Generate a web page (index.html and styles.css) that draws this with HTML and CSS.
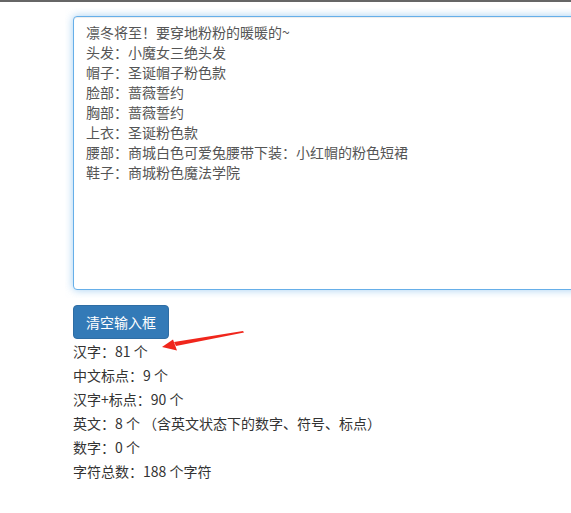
FILE: index.html
```html
<!DOCTYPE html>
<html lang="zh-CN">
<head>
<meta charset="utf-8">
<title>字数统计</title>
<link rel="stylesheet" href="styles.css">
</head>
<body>
<div class="topbar"></div>
<main class="wrap">
  <div class="input-clip">
    <textarea class="input" spellcheck="false">凛冬将至！要穿地粉粉的暖暖的~
头发：小魔女三绝头发
帽子：圣诞帽子粉色款
脸部：蔷薇誓约
胸部：蔷薇誓约
上衣：圣诞粉色款
腰部：商城白色可爱兔腰带下装：小红帽的粉色短裙
鞋子：商城粉色魔法学院</textarea>
  </div>
  <div class="actions">
    <button class="btn" type="button">清空输入框</button>
  </div>
  <div class="stats">
    <div class="stat">汉字：81 个</div>
    <div class="stat">中文标点：9 个</div>
    <div class="stat">汉字+标点：90 个</div>
    <div class="stat">英文：8 个 （含英文状态下的数字、符号、标点）</div>
    <div class="stat">数字：0 个</div>
    <div class="stat">字符总数：188 个字符</div>
  </div>
</main>
<svg class="arrow" width="571" height="513" viewBox="0 0 571 513">
  <polygon points="243,331 244,332.5 176,346 174,342" fill="#f0261c"/>
  <polygon points="162,347 173,339.5 177,350.5" fill="#f0261c"/>
</svg>
</body>
</html>
```

FILE: styles.css
```css
html, body {
  margin: 0;
  padding: 0;
  overflow: hidden;
  background: #fff;
}
body {
  width: 571px;
  height: 513px;
  font-family: "Noto Sans CJK SC", "Microsoft YaHei", sans-serif;
  font-size: 14px;
  color: #333;
  position: relative;
}
.topbar {
  height: 2px;
  background: #666;
}
.wrap {
  padding: 6px 0 0 73px;
}
.input-clip {
  overflow: hidden;
  width: 498px;
  padding: 8px 0 8px 0;
  margin-left: -8px;
  padding-left: 8px;
}
.input {
  display: block;
  box-sizing: border-box;
  width: 520px;
  height: 274px;
  margin: 0;
  padding: 5px 12px;
  border: 1px solid #66afe9;
  border-radius: 4px;
  box-shadow: inset 0 1px 1px rgba(0,0,0,.075), 0 0 8px rgba(102,175,233,.6);
  outline: none;
  resize: none;
  font-family: "Noto Sans CJK SC", "Microsoft YaHei", sans-serif;
  font-size: 14px;
  line-height: 20px;
  color: #555;
  overflow: hidden;
}
.actions {
  padding-top: 7px;
}
.btn {
  display: block;
  box-sizing: border-box;
  height: 34px;
  padding: 0 12px;
  border: 1px solid #2e6da4;
  border-radius: 4px;
  background: #337ab7;
  color: #fff;
  font-family: "Noto Sans CJK SC", "Microsoft YaHei", sans-serif;
  font-size: 14px;
  line-height: 32px;
}
.stats {
  display: flex;
  flex-direction: column;
}
.stat {
  line-height: 24px;
  height: 24px;
}
.arrow {
  position: absolute;
  left: 0;
  top: 0;
  pointer-events: none;
}
```
